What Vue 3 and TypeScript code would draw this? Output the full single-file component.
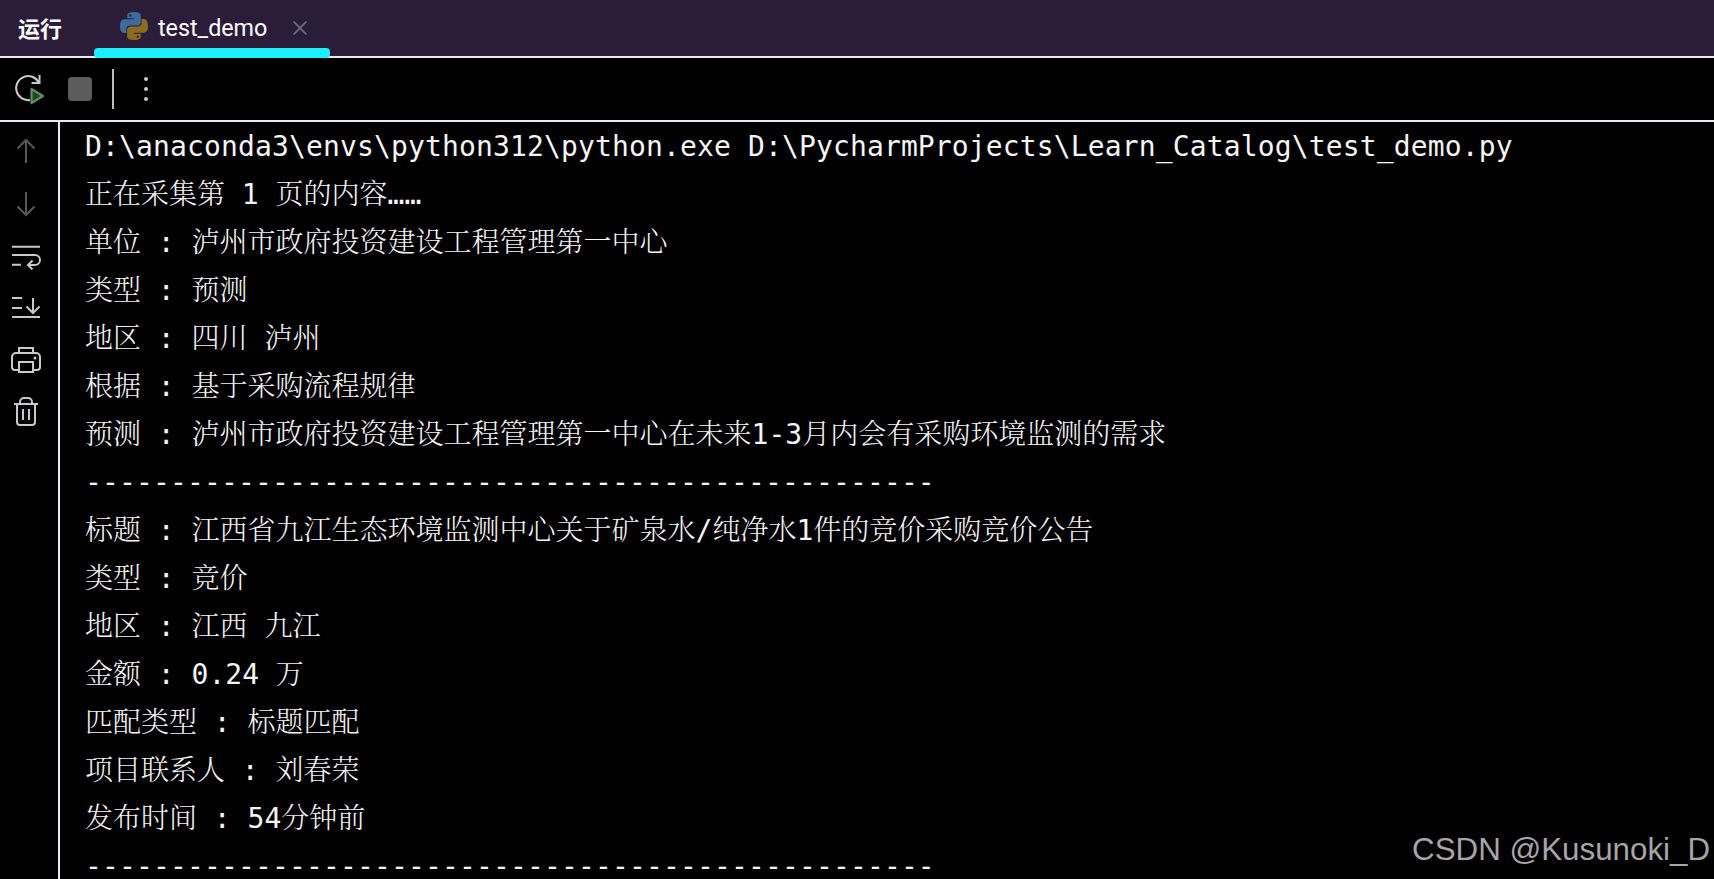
<script setup lang="ts">
const dashes = '-'.repeat(50)
interface Line { text: string; ascii?: boolean }
const lines: Line[] = [
  { text: 'D:\\anaconda3\\envs\\python312\\python.exe D:\\PycharmProjects\\Learn_Catalog\\test_demo.py', ascii: true },
  { text: '正在采集第 1 页的内容……' },
  { text: '单位 : 泸州市政府投资建设工程管理第一中心' },
  { text: '类型 : 预测' },
  { text: '地区 : 四川 泸州' },
  { text: '根据 : 基于采购流程规律' },
  { text: '预测 : 泸州市政府投资建设工程管理第一中心在未来1-3月内会有采购环境监测的需求' },
  { text: dashes, ascii: true },
  { text: '标题 : 江西省九江生态环境监测中心关于矿泉水/纯净水1件的竞价采购竞价公告' },
  { text: '类型 : 竞价' },
  { text: '地区 : 江西 九江' },
  { text: '金额 : 0.24 万' },
  { text: '匹配类型 : 标题匹配' },
  { text: '项目联系人 : 刘春荣' },
  { text: '发布时间 : 54分钟前' },
  { text: dashes, ascii: true },
]
</script>

<template>
  <div class="window">
    <header class="tabbar">
      <span class="title">运行</span>
      <div class="tab">
        <svg class="py" viewBox="0 0 110 110" width="28" height="28">
          <path fill="#3c6c9b" fill-rule="evenodd" d="M54.9 0C26.8 0 28.6 12.2 28.6 12.2l.03 12.6h26.8v3.8H17.9S0 26.5 0 54.9s15.7 27.4 15.7 27.4h9.4V69.1s-.5-15.7 15.4-15.7h26.6s14.9.2 14.9-14.4V14.8S84.3 0 54.9 0zM40.2 8.5a4.8 4.8 0 1 1 0 9.6 4.8 4.8 0 0 1 0-9.6z" />
          <path fill="#8d6b20" fill-rule="evenodd" transform="rotate(180 55 55)" d="M54.9 0C26.8 0 28.6 12.2 28.6 12.2l.03 12.6h26.8v3.8H17.9S0 26.5 0 54.9s15.7 27.4 15.7 27.4h9.4V69.1s-.5-15.7 15.4-15.7h26.6s14.9.2 14.9-14.4V14.8S84.3 0 54.9 0zM40.2 8.5a4.8 4.8 0 1 1 0 9.6 4.8 4.8 0 0 1 0-9.6z" />
        </svg>
        <span class="tabname">test_demo</span>
        <svg class="close" viewBox="0 0 14 14" width="14" height="14">
          <path d="M.7.7l12.6 12.6M13.3.7.7 13.3" fill="none" stroke="#6f6a75" stroke-width="1.8" />
        </svg>
        <span class="active-bar"></span>
      </div>
    </header>

    <div class="toolbar">
      <svg class="rerun" viewBox="0 0 32 34" width="32" height="34">
        <path d="M25 11A12 12 0 1 0 16 28" fill="none" stroke="#c9c9cc" stroke-width="2" />
        <path d="M25.5 3v8h-8" fill="none" stroke="#c9c9cc" stroke-width="2" />
        <path d="M17.5 17 29 24l-11.500 7z" fill="#26402a" stroke="#57965c" stroke-width="2.200" stroke-linejoin="round" />
      </svg>
      <span class="stop"></span>
      <span class="vsep"></span>
      <svg class="dots" viewBox="0 0 8 28" width="8" height="28">
        <circle cx="4" cy="4" r="2" fill="#c9c9cc" />
        <circle cx="4" cy="14" r="2" fill="#c9c9cc" />
        <circle cx="4" cy="24" r="2" fill="#c9c9cc" />
      </svg>
    </div>

    <div class="main">
      <aside class="side">
        <svg viewBox="0 0 30 30" class="ico dim">
          <path d="M15 27V4M6.500 12.500 15 4l8.500 8.500" />
        </svg>
        <svg viewBox="0 0 30 30" class="ico dim">
          <path d="M15 4v23M6.500 18.500 15 27l8.500-8.500" />
        </svg>
        <svg viewBox="0 0 30 30" class="ico">
          <path d="M1 6.700H29M1 15H24a5 5 0 0 1 0 10H17M21.500 20.500 17 25l4.500 4.500M1 24.700H10" />
        </svg>
        <svg viewBox="0 0 30 30" class="ico">
          <path d="M1 6H11M1 16H11M1 25H29M22 6V21M15.500 14.500 22 21l6.500-6.500" />
        </svg>
        <svg viewBox="0 0 30 30" class="ico">
          <path d="M8 26H4a3 3 0 0 1-3-3V13a4 4 0 0 1 4-4H25a4 4 0 0 1 4 4V23a3 3 0 0 1-3 3H22M8 9V4h14v5" />
          <rect x="8" y="18" width="14" height="10" />
          <circle cx="24" cy="14" r="1.500" class="solid" />
        </svg>
        <svg viewBox="0 0 30 30" class="ico">
          <path d="M3 8H27M9 8V6a4 4 0 0 1 4-4h4a4 4 0 0 1 4 4v2M6 8V26a3 3 0 0 0 3 3h12a3 3 0 0 0 3-3V8M12 13V24M18 13V24" />
        </svg>
      </aside>
      <section class="console">
        <div v-for="(l, i) in lines" :key="i" class="line" :class="{ ascii: l.ascii }">{{ l.text }}</div>
      </section>
    </div>
    <span class="mark">CSDN @Kusunoki_D</span>
  </div>
</template>

<style scoped>
.window {
  position: relative;
  width: 1714px;
  height: 879px;
  overflow: hidden;
  background: #000;
  color: #fff;
  display: flex;
  flex-direction: column;
}
.tabbar {
  height: 56px;
  flex: none;
  background: #2b1d3a;
  border-bottom: 2px solid #ece8ee;
  display: flex;
  align-items: center;
  padding-left: 18px;
}
.title {
  font: 700 22px "Noto Sans CJK SC", sans-serif;
  color: #fff;
  width: 76px;
  margin-bottom: 3px;
}
.tab {
  position: relative;
  width: 236px;
  height: 56px;
  display: flex;
  align-items: center;
  padding-left: 26px;
  box-sizing: border-box;
}
.py { flex: none; margin-bottom: 4px; }
.tabname {
  margin-left: 10px;
  font: 400 23.300px Roboto, sans-serif;
  color: #fff;
}
.close { margin-left: 26px; margin-bottom: 1px; }
.active-bar {
  position: absolute;
  left: 0;
  right: 0;
  top: 48px;
  height: 10px;
  border-radius: 4px;
  background: #1aeeff;
}
.toolbar {
  height: 62px;
  flex: none;
  border-bottom: 2px solid #ece8ee;
  display: flex;
  align-items: center;
  padding-left: 14px;
}
.rerun { flex: none; }
.stop {
  width: 24px;
  height: 24px;
  margin-left: 22px;
  border-radius: 4px;
  background: #5c5c5c;
}
.vsep {
  width: 2px;
  height: 40px;
  margin-left: 20px;
  background: #bdbdbd;
}
.dots { margin-left: 28px; flex: none; }
.main {
  flex: 1;
  min-height: 0;
  display: flex;
}
.side {
  width: 47px;
  flex: none;
  border-right: 2px solid #ece8ee;
  padding: 14px 0 0 11px;
  display: flex;
  flex-direction: column;
  gap: 22px;
}
.ico {
  width: 30px;
  height: 30px;
  fill: none;
  stroke: #c9c9cc;
  stroke-width: 2;
}
.ico .solid { fill: #c9c9cc; stroke: none; }
.ico.dim { stroke: #585858; }
.console {
  padding: 1px 0 0 25px;
  flex: 1;
  min-width: 0;
}
.line {
  height: 48px;
  line-height: 48px;
  white-space: pre;
  font-family: "DejaVu Sans Mono", "Noto Serif CJK SC", "Noto Sans CJK SC", monospace;
  font-size: 28px;
  font-weight: 300;
  color: #f4f4f4;
}
.line.ascii { letter-spacing: 0.14px; }
.mark {
  position: absolute;
  right: 4px;
  bottom: 11px;
  font: 400 31.300px "Liberation Sans", sans-serif;
  color: #a6a6a6;
}
</style>
